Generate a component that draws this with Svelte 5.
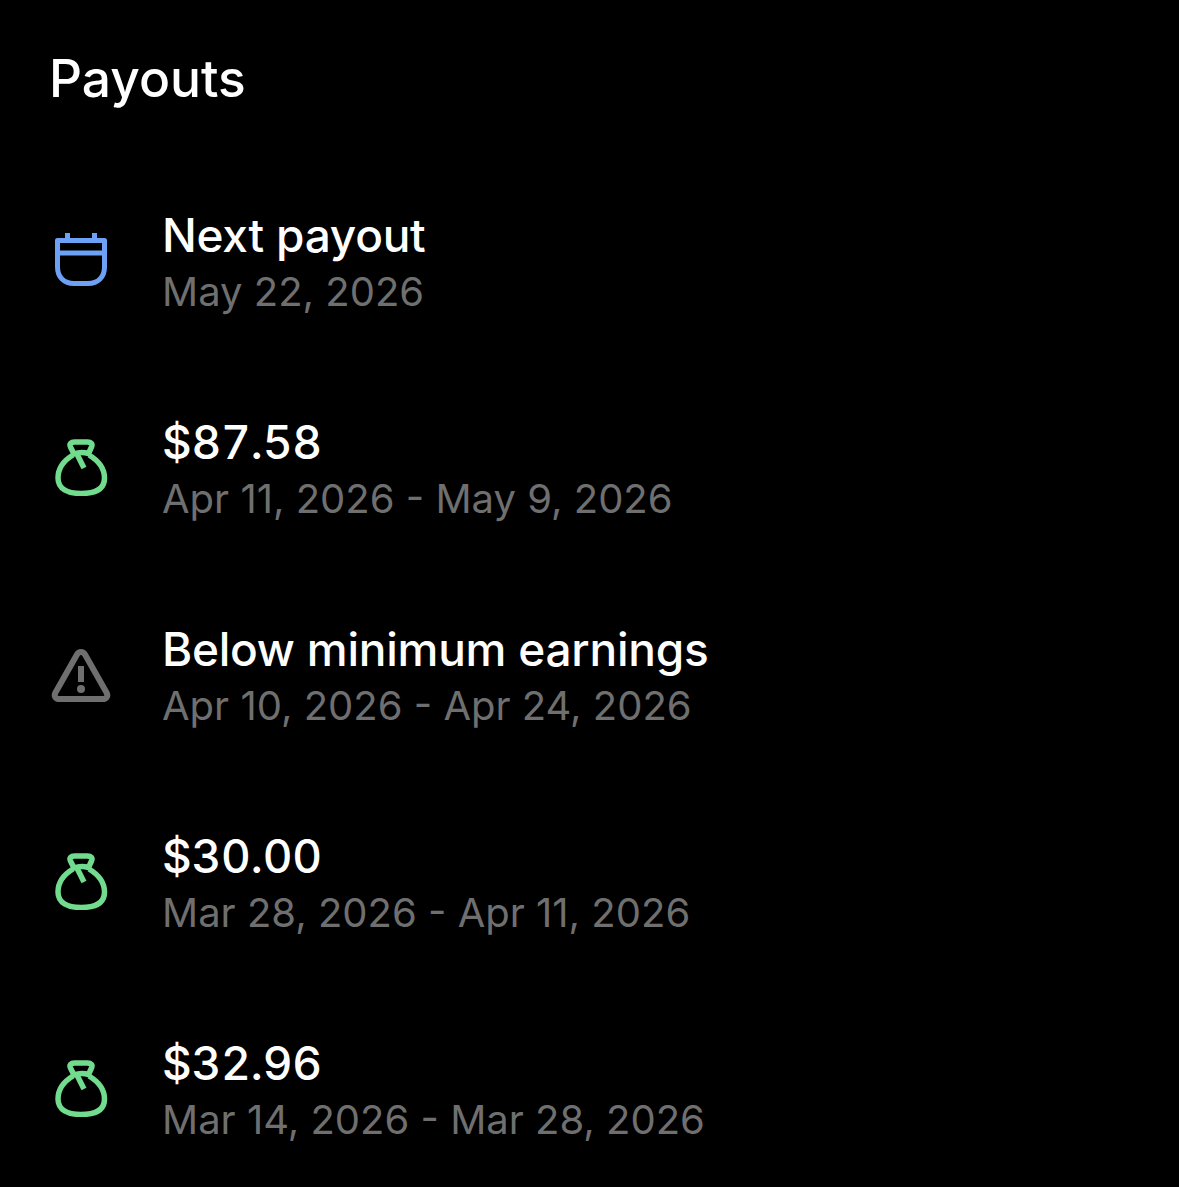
<script lang="ts">
	type Kind = 'calendar' | 'bag' | 'warn';

	const rows: { kind: Kind; title: string; sub: string }[] = [
		{ kind: 'calendar', title: 'Next payout', sub: 'May 22, 2026' },
		{ kind: 'bag', title: '$87.58', sub: 'Apr 11, 2026 - May 9, 2026' },
		{ kind: 'warn', title: 'Below minimum earnings', sub: 'Apr 10, 2026 - Apr 24, 2026' },
		{ kind: 'bag', title: '$30.00', sub: 'Mar 28, 2026 - Apr 11, 2026' },
		{ kind: 'bag', title: '$32.96', sub: 'Mar 14, 2026 - Mar 28, 2026' }
	];
</script>

<div class="page">
	<h1>Payouts</h1>
	<ul>
		{#each rows as row}
			<li>
				<svg class="icon {row.kind}" width="60" height="60" viewBox="0 0 60 60" fill="none">
					{#if row.kind === 'calendar'}
						<path d="M6.5 11.5H53.5V38C53.5 48 47 54.5 37 54.5H23C13 54.5 6.5 48 6.5 38Z" stroke-width="5" stroke-linejoin="round" />
						<path d="M6.5 24H53.5" stroke-width="5" />
						<path d="M16.5 4V10M43.5 4V10" stroke-width="5" />
					{:else if row.kind === 'bag'}
						<path d="M22 19C12 25 7 33 7 42C7 53 17 57.5 30 57.5C44 57.5 53.5 53 53.5 42C53.5 33 48 25 38 19" stroke-width="5.5" />
						<path d="M23 18L19.5 11C18 8 20 6 23.5 6H36.5C40 6 42 8 40.5 11L37.5 17.5C32 16 27 16.5 23 18Z" stroke-width="5.5" stroke-linejoin="round" />
						<path d="M25.7 17.5L33 32" stroke-width="5.5" />
					{:else}
						<path d="M26 11.5C28 8 32 8 34 11.5L55.5 49.5C57.5 53 55.5 56 51.5 56H8.5C4.5 56 2.5 53 4.5 49.5Z" stroke-width="6" stroke-linejoin="round" />
						<path d="M30 23V39" stroke-width="6" />
						<circle cx="30" cy="46" r="4" class="dot" />
					{/if}
				</svg>
				<div class="text">
					<div class="title">{row.title}</div>
					<div class="sub">{row.sub}</div>
				</div>
			</li>
		{/each}
	</ul>
</div>

<style>
	:global(body) {
		background: #000;
	}

	.page {
		height: 1187px;
		overflow: hidden;
		padding: 46px 0 0 49px;
		box-sizing: border-box;
		background: #000;
		font-family: Inter, 'Liberation Sans', sans-serif;
	}

	h1 {
		margin: 0;
		font-size: 51.5px;
		line-height: 64px;
		font-weight: 500;
		color: #fff;
	}

	ul {
		list-style: none;
		margin: 97px 0 0;
		padding: 0;
		display: flex;
		flex-direction: column;
		gap: 95px;
	}

	li {
		display: flex;
		align-items: flex-start;
		gap: 51px;
		padding-left: 2px;
	}

	.icon {
		flex: none;
		margin-top: 22px;
	}

	.text {
		display: flex;
		flex-direction: column;
	}

	.title {
		font-size: 46px;
		line-height: 56px;
		font-weight: 500;
		letter-spacing: -0.25px;
		font-variant-numeric: tabular-nums;
		color: #fff;
	}

	.sub {
		font-size: 40px;
		line-height: 56px;
		padding-top: 1px;
		margin-bottom: -1px;
		color: #6f6f6f;
	}

	.calendar {
		stroke: #6da1f5;
	}

	.bag {
		stroke: #72dc8e;
	}

	.warn {
		stroke: #6f6f6f;
	}

	.dot {
		fill: #6f6f6f;
		stroke: none;
	}
</style>
